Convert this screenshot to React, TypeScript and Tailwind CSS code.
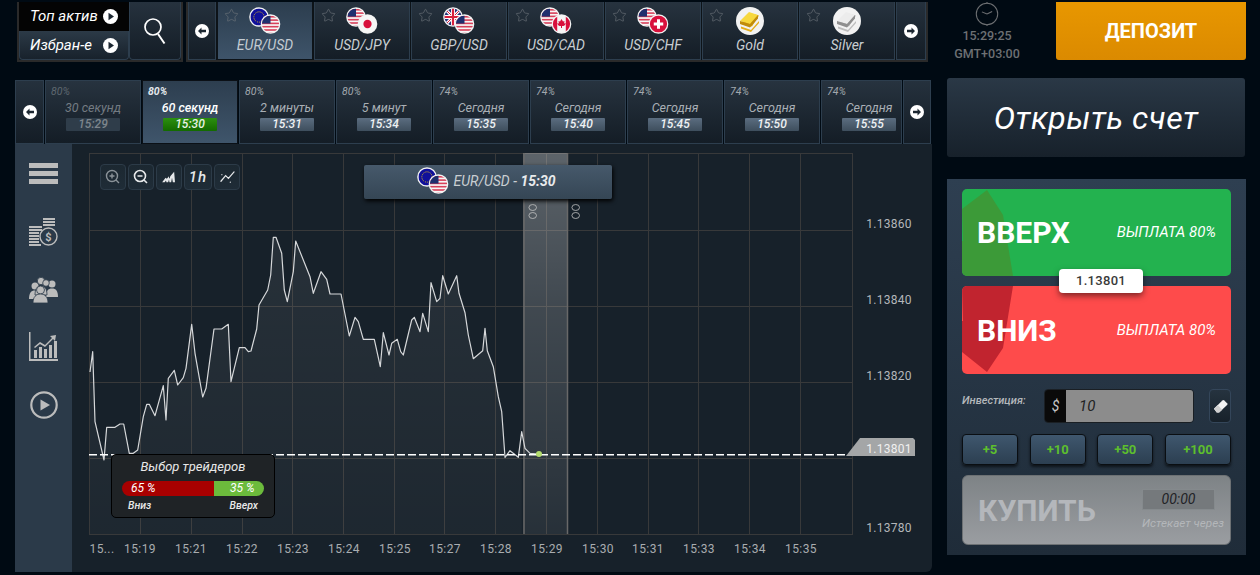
import { useId } from "react";
import { Star } from "lucide-react";

const assets = [
  { name: "EUR/USD", a: "eu", b: "us", active: true },
  { name: "USD/JPY", a: "us", b: "jp" },
  { name: "GBP/USD", a: "gb", b: "us" },
  { name: "USD/CAD", a: "us", b: "ca" },
  { name: "USD/CHF", a: "us", b: "ch" },
  { name: "Gold", metal: "gold" },
  { name: "Silver", metal: "silver" },
];

const expiries = [
  { pct: "80%", label: "30 секунд", time: "15:29", dim: true },
  { pct: "80%", label: "60 секунд", time: "15:30", active: true },
  { pct: "80%", label: "2 минуты", time: "15:31" },
  { pct: "80%", label: "5 минут", time: "15:34" },
  { pct: "74%", label: "Сегодня", time: "15:35" },
  { pct: "74%", label: "Сегодня", time: "15:40" },
  { pct: "74%", label: "Сегодня", time: "15:45" },
  { pct: "74%", label: "Сегодня", time: "15:50" },
  { pct: "74%", label: "Сегодня", time: "15:55", last: true },
];

const linePoints =
  "90,372 92.7,351.7 95,421.7 104,460 106.7,427.3 115,427.3 120,424 123.7,424 129.3,453.3 133.3,453.3 137.7,450 143.3,416.7 146.7,404.3 149.3,404.3 155,415.7 163.3,385.7 166,420 168.3,378.3 174.3,370.3 177.7,385 183.3,377.7 186,368.3 191.7,324.3 195,353.3 202.7,397 206,388.3 214,329 221.7,329 228.3,324.3 231,381.7 239.3,347.7 245,347.7 248.3,351.7 251,351 256.7,329 259,305 267.7,290 270.7,275 273.3,237.3 276,237.3 281.7,253.3 284.3,290 287.3,301.7 293.3,271.7 295.7,241 310,276.7 313.3,293.3 321,271.7 326.7,279.3 330,294 341,294 349.3,336 355,317.3 358.3,321.7 363.3,339.3 374.3,339.3 380.3,366.7 383.3,332.7 389,355 391.7,343.3 397.3,339.3 400.7,351.7 403.3,355 411.7,320 414.3,317.3 420,331.7 422.7,313.3 428.3,331.7 431,282.7 436.7,301.7 440,298.3 442.7,275.7 448.3,294 456.7,275.7 459,293.3 465,312.7 468.3,335 473.3,358.7 482.7,350.7 485,328.3 487.3,350.7 493.3,366.7 498.3,396.7 501.7,411.7 505,457.3 510,450.7 518.3,457.3 521.7,431.7";
const lineTail = "521.7,431.7 525,448.3 530,453.3 539,454";

const gridX = [140.5, 191.5, 242.5, 292.5, 343.5, 394.5, 444.5, 495.5, 546.5, 597.5, 648.5, 698.5, 749.5, 800.5];
const gridY = [230.5, 306.5, 382.5, 458.5];
const timeLabels = ["15...", "15:19", "15:21", "15:22", "15:23", "15:24", "15:25", "15:27", "15:28", "15:29", "15:30", "15:31", "15:33", "15:34", "15:35"];
const timeX = [102, 140, 191, 242, 293, 344, 395, 445, 496, 547, 598, 648, 699, 750, 801];
const priceLabels = [["1.13860", 224], ["1.13840", 300], ["1.13820", 376], ["1.13780", 528]] as const;

function FlagCircle({ code, cx, cy, r }: { code: string; cx: number; cy: number; r: number }) {
  const id = "f" + useId().replace(/[^a-zA-Z0-9]/g, "");
  return (
    <g>
      <circle cx={cx} cy={cy} r={r + 1.2} fill="#f4f4f4" />
      <clipPath id={id}>
        <circle cx={cx} cy={cy} r={r} />
      </clipPath>
      <g clipPath={`url(#${id})`}>
        {code === "eu" && (
          <>
            <rect x={cx - r} y={cy - r} width={2 * r} height={2 * r} fill="#10109a" />
            <circle cx={cx} cy={cy} r={r * 0.6} fill="none" stroke="#c9a82a" strokeWidth="1" strokeDasharray="1.2 1" />
          </>
        )}
        {code === "us" && (
          <>
            <rect x={cx - r} y={cy - r} width={2 * r} height={2 * r} fill="#f6f6f6" />
            {[0, 1, 2, 3, 4, 5].map((i) => (
              <rect key={i} x={cx - r} y={cy - r + i * 3.3 + 0.6} width={2 * r} height="1.6" fill="#d8405a" />
            ))}
            <rect x={cx - r} y={cy - r} width={r} height={r * 0.95} fill="#1f2f6e" />
          </>
        )}
        {code === "jp" && (
          <>
            <rect x={cx - r} y={cy - r} width={2 * r} height={2 * r} fill="#f6f6f6" />
            <circle cx={cx} cy={cy} r={r * 0.48} fill="#d8103c" />
          </>
        )}
        {code === "gb" && (
          <>
            <rect x={cx - r} y={cy - r} width={2 * r} height={2 * r} fill="#27337a" />
            <path d={`M${cx - r} ${cy - r}L${cx + r} ${cy + r}M${cx + r} ${cy - r}L${cx - r} ${cy + r}`} stroke="#fff" strokeWidth="3" />
            <path d={`M${cx - r} ${cy - r}L${cx + r} ${cy + r}M${cx + r} ${cy - r}L${cx - r} ${cy + r}`} stroke="#d8203c" strokeWidth="1" />
            <path d={`M${cx} ${cy - r}V${cy + r}M${cx - r} ${cy}H${cx + r}`} stroke="#fff" strokeWidth="4" />
            <path d={`M${cx} ${cy - r}V${cy + r}M${cx - r} ${cy}H${cx + r}`} stroke="#d8203c" strokeWidth="2.2" />
          </>
        )}
        {code === "ca" && (
          <>
            <rect x={cx - r} y={cy - r} width={2 * r} height={2 * r} fill="#f6f6f6" />
            <rect x={cx - r} y={cy - r} width={r * 0.5} height={2 * r} fill="#d8103c" />
            <rect x={cx + r * 0.5} y={cy - r} width={r * 0.5} height={2 * r} fill="#d8103c" />
            <path d={`M${cx} ${cy - 5}l1.5 2.5 1.5-.5-.4 2.5 1.6-.5-.6 2-1.6 1h-1.5v2h-1v-2h-1.5l-1.6-1-.6-2 1.6.5-.4-2.5 1.5.5z`} fill="#d8103c" />
          </>
        )}
        {code === "ch" && (
          <>
            <rect x={cx - r} y={cy - r} width={2 * r} height={2 * r} fill="#d8103c" />
            <path d={`M${cx} ${cy - r * 0.55}V${cy + r * 0.55}M${cx - r * 0.55} ${cy}H${cx + r * 0.55}`} stroke="#fff" strokeWidth="3" />
          </>
        )}
      </g>
    </g>
  );
}

function PairIcon({ a, b, className }: { a: string; b: string; className?: string }) {
  return (
    <svg viewBox="0 0 32 28" className={className}>
      <FlagCircle code={a} cx={10} cy={10} r={8.6} />
      <FlagCircle code={b} cx={21.5} cy={17} r={8.6} />
    </svg>
  );
}

function MetalIcon({ kind }: { kind: string }) {
  const gold = kind === "gold";
  const top = gold ? "#f7d83e" : "#ececec";
  const side = gold ? "#c08c0c" : "#8f8f8f";
  const back = gold ? "#e4ae1a" : "#bdbdbd";
  return (
    <svg viewBox="0 0 28 28" className="h-[28px] w-[28px]">
      <circle cx="14" cy="14" r="14" fill="#f2f2f2" />
      <path d="M5 17 13 6l10 2.500-7 11z" fill={back} />
      <path d="M4 14 13 5l9 3-8 9z" fill={top} />
      <path d="M4 14v3l10 3.500V17zM14 17v3.500l8-9V8z" fill={side} />
      <path d="M5 19.500l10 3.500 8-9v2l-8 9-10-3.500z" fill={back} />
    </svg>
  );
}

function RoundArrow({ left }: { left?: boolean }) {
  return (
    <svg viewBox="0 0 14 14" className="h-[14px] w-[14px]">
      <circle cx="7" cy="7" r="7" fill="#fff" />
      <path d={left ? "M3 7l3.500-3.500v2.300H11v2.400H6.500v2.300z" : "M11 7 7.500 3.500v2.300H3v2.400h4.500v2.300z"} fill="#1c2731" />
    </svg>
  );
}

function RoundPlay() {
  return (
    <svg viewBox="0 0 15 15" className="h-[15px] w-[15px]">
      <circle cx="7.500" cy="7.500" r="7.500" fill="#fff" />
      <path d="M5.500 3.800 11 7.500l-5.500 3.700z" fill="#1c2731" />
    </svg>
  );
}

function AssetBar() {
  return (
    <div className="ml-[3px] flex h-[60px] w-[742px] gap-px border-r-2 border-b-2 border-l-2 border-[#2a2a2a] bg-[#0d1318]">
      <div className="flex w-[28px] shrink-0 items-center justify-center border border-t-0 border-[#2d3e4e] bg-gradient-to-b from-[#25313d] to-[#141d26]">
        <RoundArrow left />
      </div>
      {assets.map((a) => (
        <div
          key={a.name}
          className={`relative flex w-[96px] shrink-0 flex-col items-center border border-t-0 ${
            a.active ? "border-[#0d1318] bg-gradient-to-b from-[#2c3d4e] to-[#3e546a]" : "border-[#2d3e4e] bg-gradient-to-b from-[#27333f] to-[#141d26]"
          }`}
        >
          <Star className="absolute top-[6px] left-[6px] h-[15px] w-[15px] text-[#6e757b]" strokeWidth={1} />
          <div className="mt-[4px] flex h-[30px] items-center">
            {a.metal ? <MetalIcon kind={a.metal} /> : <PairIcon a={a.a!} b={a.b!} className="h-[28px] w-[32px]" />}
          </div>
          <div className={`mt-px text-[14px] leading-[16px] italic ${a.active ? "text-[#c3cbd2]" : "text-[#c9ced2]"}`}>{a.name}</div>
        </div>
      ))}
      <div className="flex w-[30px] shrink-0 items-center justify-center border border-t-0 border-[#2d3e4e] bg-gradient-to-b from-[#25313d] to-[#141d26]">
        <RoundArrow />
      </div>
    </div>
  );
}

function ExpiryBar() {
  return (
    <div className="flex h-[64px] w-[917px] gap-px">
      <div className="flex w-[29px] shrink-0 items-center justify-center border border-[#2d3e4e] bg-gradient-to-b from-[#25313d] to-[#141d26]">
        <RoundArrow left />
      </div>
      {expiries.map((e) => (
        <div
          key={e.time}
          className={`relative flex shrink-0 flex-col border ${e.last ? "w-[81px] items-start" : "w-[96px] items-center"} ${
            e.active ? "border-[#0b1016] bg-gradient-to-b from-[#2d3e4f] to-[#3f556b]" : "border-[#2d3e4e] bg-gradient-to-b from-[#27333f] to-[#141d26]"
          }`}
        >
          <div className={`absolute top-[5px] left-[5px] text-[10.5px] leading-[12px] italic ${e.active ? "font-bold text-[#e4e8ec]" : e.dim ? "text-[#5f6870]" : "text-[#a2a8ae]"}`}>{e.pct}</div>
          <div className={e.last ? "ml-[20px] flex flex-col items-center" : "flex flex-col items-center"}>
            <div
              className={`mt-[19px] text-[12.5px] leading-[16px] italic ${
                e.active ? "font-medium text-white" : e.dim ? "text-[#737b82]" : "text-[#a9afb5]"
              }`}
            >
              {e.label}
            </div>
            <div
              className={`mt-[2px] flex h-[13px] w-[54px] items-center justify-center rounded-[1px] text-[12px] leading-[13px] font-medium italic ${
                e.active
                  ? "bg-gradient-to-b from-[#2c9010] to-[#136a00] text-[#e8f2e4]"
                  : e.dim
                    ? "bg-[#2f3d4a] text-[#7d858c]"
                    : "bg-gradient-to-b from-[#5b6d80] to-[#3e4e5d] text-[#eef1f3]"
              }`}
            >
              {e.time}
            </div>
          </div>
        </div>
      ))}
      <div className="flex w-[28px] shrink-0 items-center justify-center border border-[#2d3e4e] bg-gradient-to-b from-[#25313d] to-[#141d26]">
        <RoundArrow />
      </div>
    </div>
  );
}

function Sidebar() {
  return (
    <div className="flex w-[57px] shrink-0 flex-col items-center bg-[#2b3a49] text-[#bcbcbc]">
      <svg viewBox="0 0 29 21" className="mt-[19px] h-[21px] w-[29px]" fill="currentColor">
        <rect width="29" height="5" />
        <rect y="8" width="29" height="5" />
        <rect y="16" width="29" height="5" />
      </svg>
      <svg viewBox="0 0 29 28" className="mt-[34px] h-[28px] w-[29px]" fill="currentColor">
        <path d="M14 0h12v2H14zM14 3h12v2H14zM14 6h12v2H14zM0 8h13v2H0zM0 11h13v2H0zM0 14h10v2H0zM0 17h10v2H0zM0 20h10v2H0zM0 23h10v2H0zM0 26h12v2H0z" />
        <circle cx="19.500" cy="18.500" r="8.500" fill="#2b3a49" stroke="currentColor" strokeWidth="1.400" />
        <text x="19.500" y="22.500" textAnchor="middle" fontSize="11" fontWeight="700">$</text>
      </svg>
      <svg viewBox="0 0 29 26" className="mt-[31px] h-[26px] w-[29px]" fill="currentColor">
        <circle cx="6" cy="9" r="3.500" />
        <circle cx="23" cy="7" r="3.500" />
        <path d="M0 22c0-6 2-8.500 6-8.500s6 2.500 6 8.500zM17 20c0-6 2-8.500 6-8.500s6 2.500 6 8.500z" />
        <circle cx="12" cy="4" r="3.700" stroke="#2b3a49" strokeWidth=".8" />
        <path d="M6 18c0-6 2-9 6-9s6 3 6 9z" stroke="#2b3a49" strokeWidth=".8" />
        <circle cx="17" cy="6" r="3.300" stroke="#2b3a49" strokeWidth=".8" />
        <circle cx="11.500" cy="13" r="4" stroke="#2b3a49" strokeWidth=".8" />
        <path d="M4 26c0-6 3-9 7.500-9s7.500 3 7.500 9z" stroke="#2b3a49" strokeWidth=".8" />
      </svg>
      <svg viewBox="0 0 29 29" className="mt-[29px] h-[29px] w-[29px]" fill="currentColor">
        <path d="M0 0h1.500v27H29v2H0z" />
        <path d="M5 26v-8h3v8zM10 26v-11h3v11zM15 26v-9h3v9zM20 26v-13h3v13zM25 26V9h3v17z" />
        <path d="M5 15l6-5 5 3 7-7-2-2 6-1-1 6-2-2-8 8-5-3-5 4z" />
      </svg>
      <svg viewBox="0 0 28 28" className="mt-[30px] h-[28px] w-[28px]" fill="currentColor">
        <circle cx="14" cy="14" r="12.700" fill="none" stroke="currentColor" strokeWidth="2.200" />
        <path d="M10.500 8.500 20 14l-9.500 5.500z" />
      </svg>
    </div>
  );
}

function ChartTool({ children, dim, w = "w-[26px]" }: { children: React.ReactNode; dim?: boolean; w?: string }) {
  return (
    <div
      className={`flex h-[26px] ${w} items-center justify-center rounded-[4px] border border-[#2c3b48] bg-gradient-to-b from-[#1c2831] to-[#1f2c37] ${
        dim ? "text-[#8b9399]" : "text-[#e6e8ea]"
      }`}
    >
      {children}
    </div>
  );
}

function Chart() {
  return (
    <div className="relative flex-1 overflow-hidden rounded-br-[6px] bg-[#17212a]">
      <svg viewBox="72 144 860 428" className="absolute inset-0 h-full w-full font-['Roboto',sans-serif]">
        <defs>
          <linearGradient id="area" x1="0" y1="0" x2="0" y2="1">
            <stop offset="0" stopColor="#ffffff" stopOpacity="0.07" />
            <stop offset="1" stopColor="#ffffff" stopOpacity="0.03" />
          </linearGradient>
          <linearGradient id="band" x1="0" y1="0" x2="0" y2="1">
            <stop offset="0" stopColor="#ffffff" stopOpacity="0.3" />
            <stop offset="0.4" stopColor="#ffffff" stopOpacity="0.18" />
            <stop offset="1" stopColor="#ffffff" stopOpacity="0.07" />
          </linearGradient>
        </defs>
        <rect x="89.500" y="153.500" width="763" height="381" fill="none" stroke="#38393a" />
        {gridX.map((x) => (
          <line key={x} x1={x} x2={x} y1="153" y2="534" stroke="#38393a" />
        ))}
        {gridY.map((y) => (
          <line key={y} x1="89" x2="852" y1={y} y2={y} stroke="#38393a" />
        ))}
        <polygon points={`90,534 ${linePoints} 521.700,534`} fill="url(#area)" />
        <rect x="523" y="153" width="45" height="381" fill="url(#band)" />
        <line x1="524" x2="524" y1="153" y2="534" stroke="#686868" strokeWidth="1.500" />
        <line x1="567.500" x2="567.500" y1="153" y2="534" stroke="#686868" strokeWidth="1.500" />
        {[532.700, 575.700].map((x) => (
          <g key={x} fill="none" stroke="#c4c4c4" strokeWidth="0.800">
            <ellipse cx={x} cy="207.500" rx="3.800" ry="3" />
            <ellipse cx={x} cy="215.500" rx="3.800" ry="3" />
          </g>
        ))}
        <polyline points={`${linePoints} ${lineTail}`} fill="none" stroke="#d6d8da" strokeWidth="1.200" strokeLinejoin="round" />
        <line x1="89" x2="846" y1="454.800" y2="454.800" stroke="#ffffff" strokeWidth="1.400" strokeDasharray="8 3" />
        <circle cx="539" cy="454" r="3" fill="#b4dc6e" />
        <polygon points="846,456 860,438 913,438 915,440 915,456" fill="#a4a6a7" />
        <text x="889" y="453" textAnchor="middle" fontSize="12" letterSpacing="0.300" fill="#f0f0f0">1.13801</text>
        {priceLabels.map(([t, y]) => (
          <text key={t} x="889" y={y + 4} textAnchor="middle" fontSize="12" letterSpacing="0.300" fill="#b4b7ba">{t}</text>
        ))}
        {timeLabels.map((t, i) => (
          <text key={t} x={timeX[i]} y="553" textAnchor="middle" fontSize="12" letterSpacing="0.400" fill="#a9adb0">{t}</text>
        ))}
      </svg>

      <div className="absolute top-[20px] left-[28px] flex gap-[2px]">
        <ChartTool dim>
          <svg viewBox="0 0 16 16" className="h-[16px] w-[16px]" fill="none" stroke="currentColor" strokeWidth="1.400">
            <circle cx="7" cy="7" r="5.500" />
            <path d="M11 11l3 3M4.500 7h5M7 4.500v5" />
          </svg>
        </ChartTool>
        <ChartTool>
          <svg viewBox="0 0 16 16" className="h-[16px] w-[16px]" fill="none" stroke="currentColor" strokeWidth="1.600">
            <circle cx="7" cy="7" r="5.500" />
            <path d="M11 11l3 3M4.500 7h5" />
          </svg>
        </ChartTool>
        <ChartTool>
          <svg viewBox="0 0 16 14" className="h-[12px] w-[14px]" fill="currentColor">
            <path d="M0 13 4 8l1.500 1L8 6v3l1-1 .5-2L14 1l1 12h-2.500l-1-5-1 5H8.500L8 10l-1 3H5l-.5-2-1.500 2z" />
          </svg>
        </ChartTool>
        <ChartTool w="w-[28px]">
          <span className="text-[15px] leading-none font-medium tracking-[1px] italic">1h</span>
        </ChartTool>
        <ChartTool>
          <svg viewBox="0 0 16 16" className="h-[15px] w-[15px]" fill="none" stroke="currentColor" strokeWidth="1.300">
            <path d="M1 12l5-6 3 3 6-7M2 5h.01M11 13h.01" strokeLinecap="round" />
          </svg>
        </ChartTool>
      </div>

      <div className="absolute top-[21px] left-[292px] flex h-[34px] w-[248px] items-center justify-center gap-[5px] rounded-[2px] bg-gradient-to-b from-[#46596b] to-[#354655] pr-[4px] pb-[2px] shadow-[1px_2px_4px_#000]">
        <PairIcon a="eu" b="us" className="h-[28px] w-[32px]" />
        <span className="text-[14px] text-[#c9ced2] italic">
          EUR/USD - <b className="font-bold text-[#e8eaec]">15:30</b>
        </span>
      </div>

      <div className="absolute top-[310px] left-[39px] h-[64px] w-[164px] rounded-[5px] border border-black bg-[#1f2326]">
        <div className="mt-[3px] text-center text-[13px] leading-[18px] text-[#e8e8e8] italic">Выбор трейдеров</div>
        <div className="mx-[10px] mt-[5px] flex h-[15px] overflow-hidden rounded-full text-[12px] leading-[15px] text-white italic">
          <div className="w-[92px] bg-[#a80000] pl-[9px]">65 %</div>
          <div className="flex-1 bg-[#6cbb3c] pl-[16px]">35 %</div>
        </div>
        <div className="mx-[16px] mt-[3px] flex justify-between text-[10.5px] leading-[14px] font-medium text-[#e8e8e8] italic">
          <span>Вниз</span>
          <span>Вверх</span>
        </div>
      </div>
    </div>
  );
}

function TradePanel() {
  return (
    <div className="relative mt-[22px] h-[376px] w-[299px] bg-gradient-to-b from-[#2e3f51] to-[#1f2c39] px-[15px] pt-[10px]">
      <div className="relative flex h-[87px] items-center overflow-hidden rounded-[5px] bg-[#23b24f]">
        <svg viewBox="0 0 51 87" className="absolute top-0 left-0 h-[87px] w-[51px]" fill="#3c9a38">
          <path d="M25 1 41 26 51 87H0V52h1L0 20z" />
        </svg>
        <div className="relative ml-[15px] text-[30px] font-bold text-white">ВВЕРХ</div>
        <div className="relative mr-[15px] ml-auto text-[15px] text-white italic">ВЫПЛАТА 80%</div>
      </div>
      <div className="relative mt-[10px] flex h-[88px] items-center overflow-hidden rounded-[5px] bg-[#fe4b4b]">
        <svg viewBox="0 0 51 88" className="absolute top-0 left-0 h-[88px] w-[51px]" fill="#c1242f">
          <path d="M0 0h51L41 62 25 86 0 66V35h1z" />
        </svg>
        <div className="relative ml-[15px] text-[30px] font-bold text-white">ВНИЗ</div>
        <div className="relative mr-[15px] ml-auto text-[15px] text-white italic">ВЫПЛАТА 80%</div>
      </div>
      <div className="absolute top-[90px] left-[112px] flex h-[24px] w-[84px] items-center justify-center rounded-[4px] bg-white text-[13px] font-medium tracking-[0.3px] text-[#3a3a3a] shadow-[0_3px_6px_rgba(0,0,0,0.5)]">
        1.13801
      </div>

      <div className="mt-[15px] flex h-[34px] items-center">
        <div className="w-[82px] pb-[10px] text-[11px] font-medium text-[#b4b8bb] italic">Инвестиция:</div>
        <div className="flex h-[34px] w-[150px] overflow-hidden rounded-[4px] border border-[#1a1f24]">
          <div className="flex w-[21px] items-center justify-center bg-[#0a0a0a] text-[14px] text-[#c8c8c8] italic">$</div>
          <div className="flex-1 bg-[#8c8c8c] pl-[13px] text-[15px] leading-[32px] text-[#222] italic">10</div>
        </div>
        <div className="ml-[15px] flex h-[34px] w-[22px] items-center justify-center rounded-[4px] border border-[#34465a] bg-gradient-to-b from-[#26333f] to-[#17212a]">
          <svg viewBox="0 0 16 16" className="h-[15px] w-[15px]">
            <path d="M1 10.500 10 1.500q1-1 2 0l3 3q1 1 0 2l-8.500 8H4z" fill="#f4f4f4" />
            <path d="M1 10.500 5 6.500l5 5-3.500 3H4z" fill="#cfcfcf" />
          </svg>
        </div>
      </div>

      <div className="mt-[11px] flex justify-between">
        {["+5", "+10", "+50", "+100"].map((v, i) => (
          <div
            key={v}
            className={`flex h-[31px] items-center justify-center rounded-[4px] border border-[#0a0e12] bg-gradient-to-b from-[#3f576e] to-[#2c3f51] text-[13px] font-bold text-[#5dbf2d] shadow-[0_2px_3px_rgba(0,0,0,0.6)] ${
              i === 3 ? "w-[66px]" : "w-[56px]"
            }`}
          >
            {v}
          </div>
        ))}
      </div>

      <div className="relative mt-[10px] flex h-[70px] items-center rounded-[6px] border border-[#6d7174] bg-gradient-to-b from-[#7e8386] to-[#9a9da1]">
        <div className="ml-[15px] text-[30px] font-bold text-[#b4b7bb]">КУПИТЬ</div>
        <div className="absolute top-[13px] left-[179px] flex h-[21px] w-[73px] items-center justify-center border border-[#858a8d] bg-[#75797c] text-[14px] text-[#1f2226] italic">00:00</div>
        <div className="absolute top-[39px] left-[179px] text-[11.7px] whitespace-nowrap text-[#b4b7ba] italic">Истекает через</div>
      </div>
    </div>
  );
}

export default function App() {
  return (
    <div className="flex h-[575px] w-[1260px] overflow-hidden bg-[#000a13] font-['Roboto',sans-serif]">
      <div className="ml-[15px] flex w-[917px] shrink-0 flex-col">
        <div className="flex h-[80px] items-start pt-[2px] pl-[2px]">
          <div className="flex h-[60px] w-[166px] shrink-0 border-r-2 border-b-2 border-l-2 border-[#2a2a2a] bg-[#141a1f]">
            <div className="flex w-[110px] flex-col">
              <div className="flex h-[29px] items-center justify-between bg-[#040404] pr-[11px] pl-[11px] text-[15px] text-white italic">
                <span>Топ актив</span>
                <RoundPlay />
              </div>
              <div className="flex flex-1 items-center justify-between rounded-b-[4px] border border-t-0 border-[#2d3e4e] bg-gradient-to-b from-[#2c3a47] to-[#18222c] pr-[10px] pl-[10px] text-[15px] text-white italic">
                <span>Избран-е</span>
                <RoundPlay />
              </div>
            </div>
            <div className="flex flex-1 items-center justify-center rounded-b-[4px] border border-t-0 border-[#2d3e4e] bg-gradient-to-b from-[#26323e] to-[#141d26]">
              <svg viewBox="0 0 24 28" className="h-[28px] w-[24px]" fill="none" stroke="#fff" strokeWidth="1.700">
                <circle cx="10" cy="10" r="8" />
                <path d="M15 17l6.500 9.500" strokeWidth="2" />
              </svg>
            </div>
          </div>
          <AssetBar />
        </div>
        <ExpiryBar />
        <div className="flex h-[428px]">
          <Sidebar />
          <Chart />
        </div>
      </div>

      <div className="ml-[15px] flex w-[299px] shrink-0 flex-col pt-[2px]">
        <div className="flex h-[58px]">
          <div className="flex w-[80px] flex-col items-center text-[12.5px] leading-[18px] font-medium text-[#6d7073]">
            <svg viewBox="0 0 28 28" className="h-[24px] w-[24px] shrink-0" fill="none" stroke="#6d7073" strokeWidth="1.200">
              <circle cx="14" cy="14" r="12.500" />
              <path d="M14 14l6-3M14 14 8 11.500M14 0v2M14 26v2" />
            </svg>
            <div className="mt-[1px]">15:29:25</div>
            <div>GMT+03:00</div>
          </div>
          <div className="ml-auto flex h-[58px] w-[190px] items-center justify-center rounded-b-[3px] bg-gradient-to-b from-[#e89700] to-[#db8a00] text-[20px] font-bold text-white">
            ДЕПОЗИТ
          </div>
        </div>
        <div className="mt-[18px] flex h-[79px] w-[298px] items-center justify-center rounded-[3px] bg-gradient-to-b from-[#2a3846] to-[#17212b] text-[32px] tracking-[0.5px] text-white italic">
          Открыть счет
        </div>
        <TradePanel />
      </div>
    </div>
  );
}
